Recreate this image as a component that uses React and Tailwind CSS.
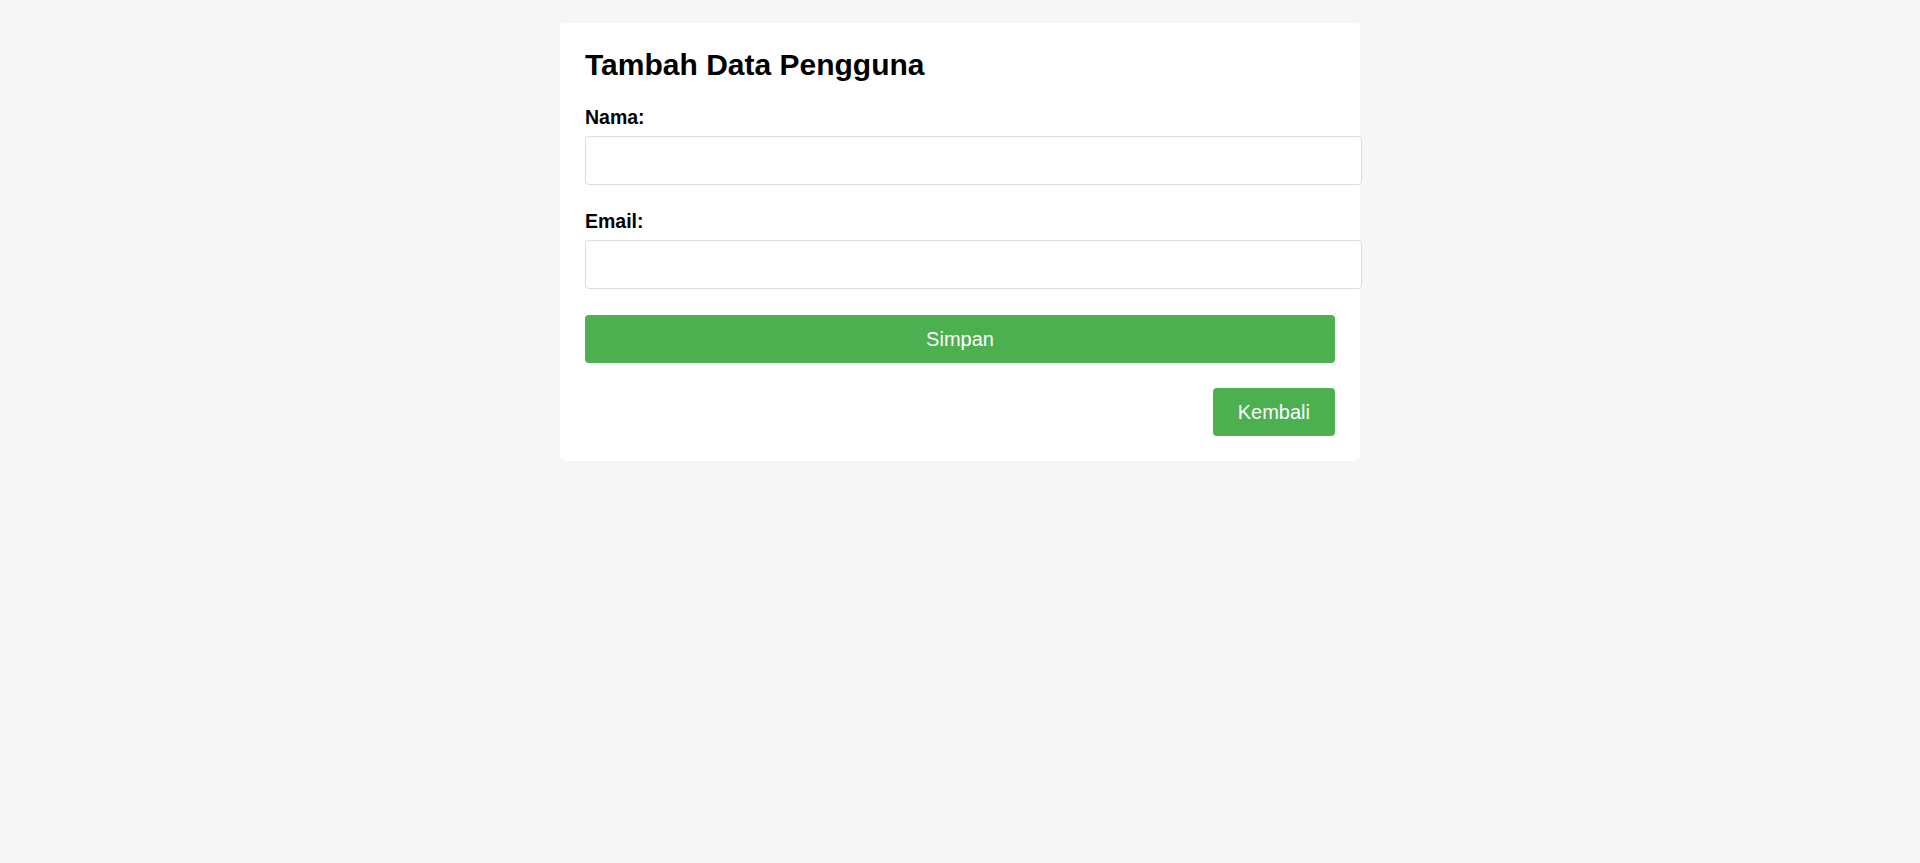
import React from "react";

export default function App() {
  return (
    <div
      className="min-h-[863px] w-full bg-[#f6f6f6] pt-[23px]"
      style={{ fontFamily: '"Liberation Sans", Arial, sans-serif' }}
    >
      <div className="mx-auto w-[800px] rounded-[5px] bg-white px-[25px] pt-[25px] pb-[25px]">
        <h1 className="m-0 text-[30px] font-bold leading-[34px] text-black">
          Tambah Data Pengguna
        </h1>
        <form className="mt-[24px] flex flex-col" onSubmit={(e) => e.preventDefault()}>
          <label className="block text-[19.5px] font-bold leading-[23px] text-black">
            Nama:
          </label>
          <input
            type="text"
            className="mt-[7px] h-[49px] w-[calc(100%+27px)] rounded-[4px] border border-[#dcdcdc] bg-white px-3 outline-none"
          />
          <label className="mt-[25px] block text-[19.5px] font-bold leading-[23px] text-black">
            Email:
          </label>
          <input
            type="email"
            className="mt-[7px] h-[49px] w-[calc(100%+27px)] rounded-[4px] border border-[#dcdcdc] bg-white px-3 outline-none"
          />
          <button
            type="submit"
            className="mt-[26px] h-[48px] w-full rounded-[4px] bg-[#4caf50] text-[20px] text-white"
          >
            Simpan
          </button>
        </form>
        <div className="mt-[25px] flex justify-end">
          <button
            type="button"
            className="h-[48px] rounded-[4px] bg-[#4caf50] px-[25px] text-[20px] text-white"
          >
            Kembali
          </button>
        </div>
      </div>
    </div>
  );
}
